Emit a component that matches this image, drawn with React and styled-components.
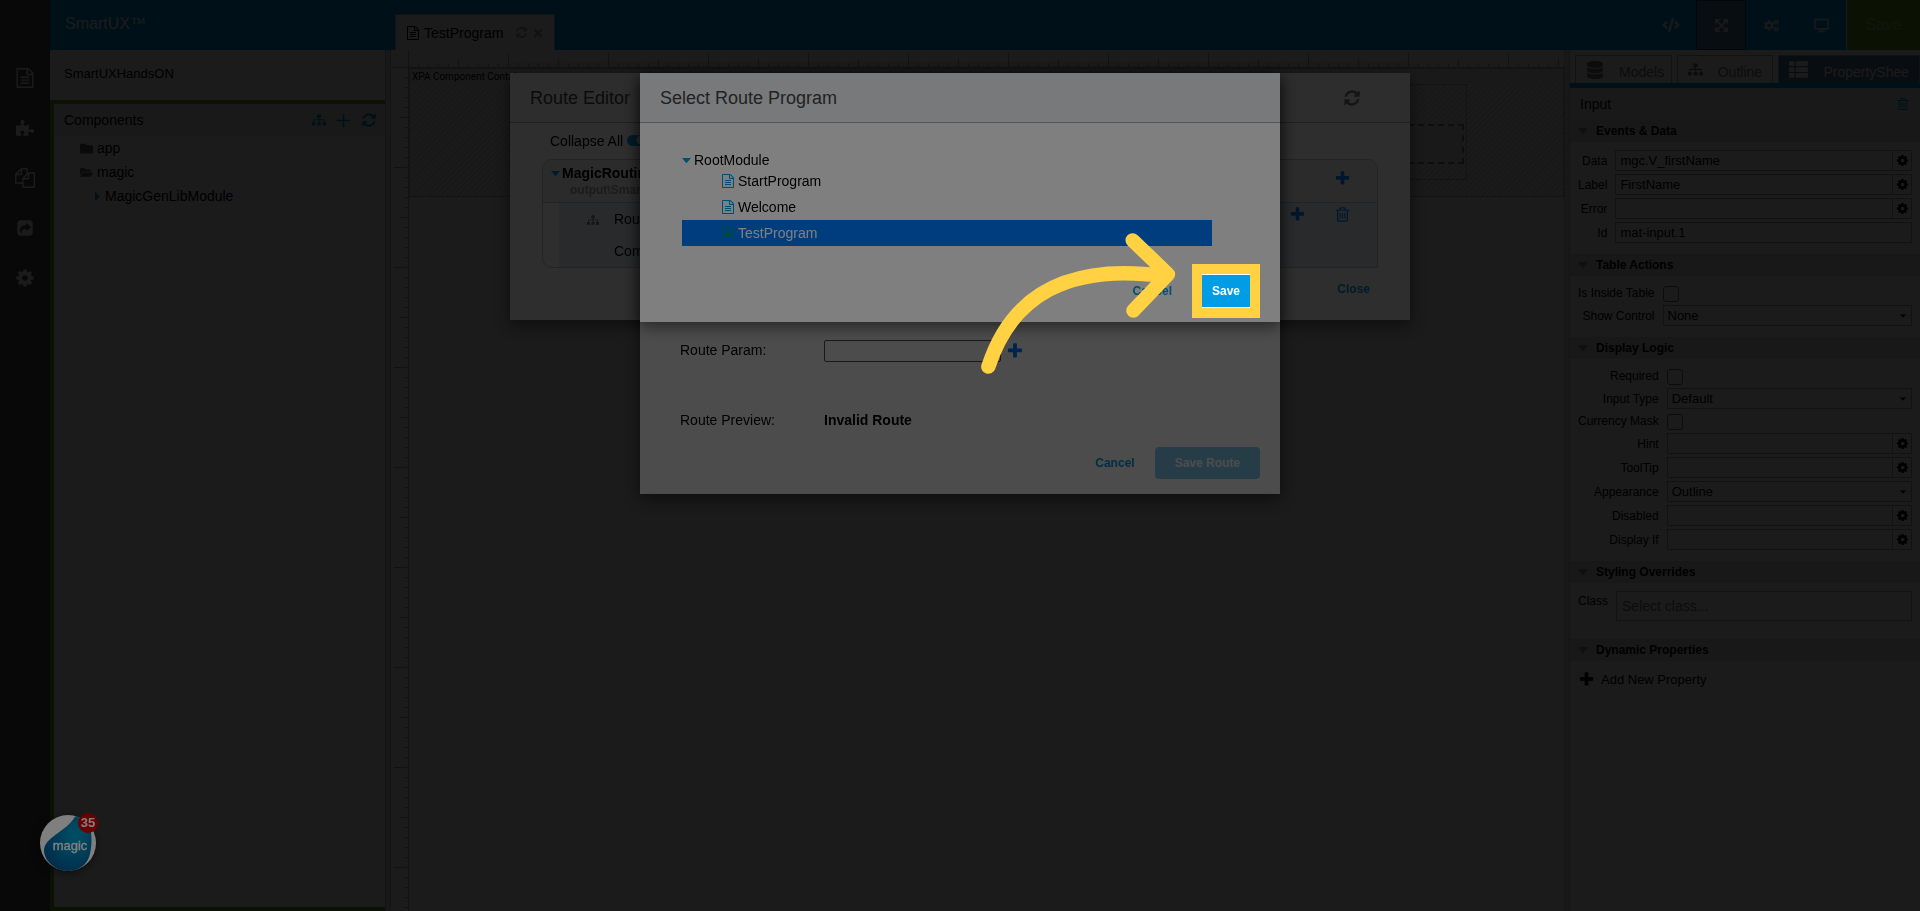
import React from 'react'
import styled, { createGlobalStyle } from 'styled-components'
import { FaCode, FaCogs, FaDatabase, FaDesktop, FaFolder, FaFolderOpen, FaPuzzlePiece, FaSitemap, FaThList, FaTimes } from 'react-icons/fa'

const GlobalStyle = createGlobalStyle`
    * {
        box-sizing: border-box;
    }

    body {
        margin: 0;
        font-family: "Liberation Sans", Arial, sans-serif;
        font-size: 14px;
        color: #000;
        overflow: hidden;
    }

    button, input, select {
        font-family: inherit;
    }

    button {
        border: 0;
        padding: 0;
        background: none;
        cursor: pointer;
    }
`;

const blue = '#009ce6';
const green = '#6fb02a';
const steel = '#4c7cae';
const line = '#aaa';

const paths = {
    refresh: 'M1639 1056q0 5-1 7-64 268-268 434.5t-478 166.5q-146 0-282.5-55t-243.5-157l-129 129q-19 19-45 19t-45-19-19-45v-448q0-26 19-45t45-19h448q26 0 45 19t19 45-19 45l-137 137q71 66 161 102t187 36q134 0 250-65t186-179q11-17 53-117 8-23 30-23h192q13 0 22.5 9.5t9.5 22.5zm25-800v448q0 26-19 45t-45 19h-448q-26 0-45-19t-19-45 19-45l138-138q-148-137-349-137-134 0-250 65t-186 179q-11 17-53 117-8 23-30 23h-199q-13 0-22.5-9.5t-9.5-22.5v-7q65-268 270-434.5t480-166.5q146 0 284 55.5t245 156.5l130-129q19-19 45-19t45 19 19 45z',
    plus: 'M1600 736v192q0 40-28 68t-68 28h-416v416q0 40-28 68t-68 28h-192q-40 0-68-28t-28-68v-416h-416q-40 0-68-28t-28-68v-192q0-40 28-68t68-28h416v-416q0-40 28-68t68-28h192q40 0 68 28t28 68v416h416q40 0 68 28t28 68z',
    thinPlus: 'M816 192h160v624h624v160h-624v624h-160v-624h-624v-160h624z',
    caretDown: 'M0 420h1792l-896 1000z',
    caretRight: 'M600 0v1792l1000-896z',
    expand: 'M1411 541l-355 355 355 355 144-144q29-31 70-14 39 17 39 59v448q0 26-19 45t-45 19h-448q-42 0-59-40-17-39 14-69l144-144-355-355-355 355 144 144q31 30 14 69-17 40-59 40h-448q-26 0-45-19t-19-45v-448q0-42 40-59 39-17 69 14l144 144 355-355-355-355-144 144q-19 19-45 19-12 0-24-5-40-17-40-59v-448q0-26 19-45t45-19h448q42 0 59 40 17 39-14 69l-144 144 355 355 355-355-144-144q-31-30-14-69 17-40 59-40h448q26 0 45 19t19 45v448q0 42-39 59-13 5-25 5-26 0-45-19z',
    cog: 'M1152 896q0-106-75-181t-181-75-181 75-75 181 75 181 181 75 181-75 75-181zm512-109v222q0 12-8 23t-20 13l-185 28q-19 54-39 91 35 50 107 138 10 12 10 25t-9 23q-27 37-99 108t-94 71q-12 0-26-9l-138-108q-44 23-91 38-16 136-29 186-7 28-36 28h-222q-14 0-24.5-8.5t-11.5-21.5l-28-184q-49-16-90-37l-141 107q-10 9-25 9-14 0-25-11-126-114-165-168-7-10-7-23 0-12 8-23 15-21 51-66.5t54-70.5q-27-50-41-99l-183-27q-13-2-21-12.5t-8-23.5v-222q0-12 8-23t19-13l186-28q14-46 39-92-40-57-107-138-10-12-10-24 0-10 9-23 26-36 98.5-107.5t94.5-71.5q13 0 26 10l138 107q44-23 91-38 16-136 29-186 7-28 36-28h222q14 0 24.5 8.5t11.5 21.5l28 184q49 16 90 37l142-107q9-9 24-9 13 0 25 10 129 119 165 170 7 8 7 22 0 12-8 23-15 21-51 66.5t-54 70.5q26 50 41 98l183 28q13 2 21 12.5t8 23.5z',
    file: 'M1596 380q28 28 48 76t20 88v1152q0 40-28 68t-68 28h-1344q-40 0-68-28t-28-68v-1600q0-40 28-68t68-28h896q40 0 88 20t76 48zm-444-244v376h376q-10-29-22-41l-313-313q-12-12-41-22zm384 1528v-1024h-416q-40 0-68-28t-28-68v-416h-768v1536h1280zm-1024-864q0-14 9-23t23-9h704q14 0 23 9t9 23v64q0 14-9 23t-23 9h-704q-14 0-23-9t-9-23v-64zm736 224q14 0 23 9t9 23v64q0 14-9 23t-23 9h-704q-14 0-23-9t-9-23v-64q0-14 9-23t23-9h704zm0 256q14 0 23 9t9 23v64q0 14-9 23t-23 9h-704q-14 0-23-9t-9-23v-64q0-14 9-23t23-9h704z',
    files: 'M1696 384q40 0 68 28t28 68v1216q0 40-28 68t-68 28h-960q-40 0-68-28t-28-68v-288h-544q-40 0-68-28t-28-68v-672q0-40 20-88t48-76l408-408q28-28 76-48t88-20h416q40 0 68 28t28 68v328q68-40 128-40h416zm-544 213l-299 299h299v-299zm-640-384l-299 299h299v-299zm196 647l316-316v-416h-384v416q0 40-28 68t-68 28h-416v640h512v-256q0-40 20-88t48-76zm956 804v-1152h-384v416q0 40-28 68t-68 28h-416v640h896z',
    trash: 'M704 736v576q0 14-9 23t-23 9h-64q-14 0-23-9t-9-23v-576q0-14 9-23t23-9h64q14 0 23 9t9 23zm256 0v576q0 14-9 23t-23 9h-64q-14 0-23-9t-9-23v-576q0-14 9-23t23-9h64q14 0 23 9t9 23zm256 0v576q0 14-9 23t-23 9h-64q-14 0-23-9t-9-23v-576q0-14 9-23t23-9h64q14 0 23 9t9 23zm128 724v-948h-896v948q0 22 7 40.5t14.5 27 10.5 8.5h832q3 0 10.5-8.500t14.500-27 7-40.500zm-672-1076h448l-48-117q-7-9-17-11h-317q-10 2-17 11zm928 32v64q0 14-9 23t-23 9h-96v948q0 83-47 143.5t-113 60.5h-832q-66 0-113-58.5t-47-141.5v-952h-96q-14 0-23-9t-9-23v-64q0-14 9-23t23-9h309l70-167q15-37 54-63t79-26h320q40 0 79 26t54 63l70 167h309q14 0 23 9t9 23z',
    share: 'M416 128h960q119 0 203.500 84.500t84.500 203.500v960q0 119-84.500 203.500t-203.500 84.500h-960q-119 0-203.500-84.500t-84.500-203.500v-960q0-119 84.500-203.500t203.500-84.500zm610 250v210q-330 0-490 150t-160 350q0 200 150 350 30 20 26-20-30-200 60-310t414-110v210q0 40 36 20l400-390q24-26 0-52l-400-390q-36-20-36-18z',
};

function Icon({ name, size = 16 }) {
    return (
        <svg width={size} height={size} viewBox="0 0 1792 1792" fill="currentColor" fillRule="evenodd" aria-hidden="true">
            <path d={paths[name]} />
        </svg>
    );
}

const Shell = styled.div`
    display: flex;
    height: 100vh;
    background: #fff;
`;

const Rail = styled.nav`
    width: 50px;
    padding-top: 53px;
    display: flex;
    flex-direction: column;
    background: #505050;

    button {
        height: 50px;
        color: #fff;
        display: flex;
        align-items: center;
        justify-content: center;
    }
`;

const Main = styled.div`
    flex: 1;
    min-width: 0;
    display: flex;
    flex-direction: column;
`;

const TopBar = styled.header`
    height: 50px;
    display: flex;
    background: ${blue};
    color: #fff;
`;

const Brand = styled.div`
    width: 345px;
    padding: 15px 0 0 15px;
    font-size: 16px;
    line-height: 18px;
`;

const ProgramTab = styled.div`
    align-self: flex-end;
    height: 36px;
    padding: 0 10px;
    display: flex;
    align-items: center;
    gap: 4px;
    background: #fff;
    border: 1px solid ${line};
    border-bottom: 0;
    color: #000;

    button {
        color: #aaa;
        display: flex;
    }

    span {
        margin-right: 8px;
    }
`;

const Tools = styled.div`
    margin-left: auto;
    display: flex;
`;

const ToolButton = styled.button`
    width: 50px;
    display: flex;
    align-items: center;
    justify-content: center;
    color: #e8e8e8;
    background: ${({ $active }) => $active ? steel : 'none'};
    border: ${({ $active }) => $active ? '1px solid #2c3f66' : '0'};
`;

const SaveTool = styled.button`
    width: 74px;
    border-left: 1px solid #fff;
    background: ${green};
    color: #99cc66;
    font-size: 16px;
`;

const Work = styled.div`
    flex: 1;
    min-height: 0;
    display: flex;
`;

const LeftPanel = styled.aside`
    width: 335px;
    display: flex;
    flex-direction: column;
`;

const ProjectName = styled.div`
    height: 50px;
    padding-left: 14px;
    font-size: 13px;
    line-height: 48px;
`;

const Components = styled.section`
    flex: 1;
    border: 4px solid ${green};
    border-right: 0;
`;

const ComponentsHead = styled.div`
    height: 32px;
    padding: 0 8px 0 10px;
    display: flex;
    align-items: center;
    background: #efefef;

    h2 {
        margin: 0 auto 0 0;
        font-size: 14px;
        font-weight: normal;
    }

    button {
        margin-left: 9px;
        color: ${blue};
        display: flex;
    }
`;

const Tree = styled.ul`
    margin: 0;
    padding: 0;
    list-style: none;
`;

const TreeItem = styled.li`
    height: 24px;
    padding-left: ${({ $indent }) => $indent}px;
    display: flex;
    align-items: center;
    gap: 4px;

    svg {
        color: ${({ $link }) => $link ? blue : '#666'};
    }
`;

const Splitter = styled.div`
    width: 6px;
    background: #e8e8e8;
    border: 1px solid #c0c0c0;
    border-width: 0 1px;
`;

const Canvas = styled.main`
    flex: 1;
    min-width: 0;
    display: grid;
    grid-template: 18px 1fr / 18px 1fr;
    background: #fafafa;
`;

const TopRuler = styled.div`
    grid-column: 2;
    border-bottom: 1px solid ${line};
    background:
        repeating-linear-gradient(90deg, transparent 0 99px, ${line} 99px 100px) left bottom / 100% 14px no-repeat,
        repeating-linear-gradient(90deg, transparent 0 49px, ${line} 49px 50px) left bottom / 100% 8px no-repeat,
        repeating-linear-gradient(90deg, transparent 0 9px, ${line} 9px 10px) left bottom / 100% 4px no-repeat;
`;

const Corner = styled.div`
    border: 1px solid ${line};
    border-width: 0 1px 1px 0;
`;

const SideRuler = styled.div`
    border-right: 1px solid ${line};
    background:
        repeating-linear-gradient(180deg, transparent 0 99px, ${line} 99px 100px) right top / 14px 100% no-repeat,
        repeating-linear-gradient(180deg, transparent 0 49px, ${line} 49px 50px) right top / 8px 100% no-repeat,
        repeating-linear-gradient(180deg, transparent 0 9px, ${line} 9px 10px) right top / 4px 100% no-repeat;
`;

const FormContainer = styled.div`
    height: 129px;
    border: 1px dotted #888;
    background: repeating-linear-gradient(135deg, #f4f4f4 0 3px, #dcdcdc 3px 4px);

    p {
        margin: 0;
        padding-left: 2px;
        background: #f0f0f0;
        font: 10px/15px Roboto, sans-serif;
    }
`;

const FormRow = styled.div`
    height: 96px;
    margin: 0 96px 0 99px;
    padding: 39px 2px 0;
    border: 1px dotted #888;
`;

const FormField = styled.div`
    height: 40px;
    border: 2px dashed #888;
    background: #eee;
`;

const RightPanel = styled.aside`
    width: 350px;
`;

const PanelTabs = styled.div`
    display: flex;
    gap: 5px;
    padding: 5px 0 0 5px;
    border-bottom: 5px solid ${blue};
`;

const PanelTab = styled.button`
    width: ${({ $wide }) => $wide ? 142 : 97}px;
    height: 28px;
    padding: 0 6px 0 10px;
    display: flex;
    align-items: center;
    gap: 15px;
    border: 1px solid ${line};
    border-bottom: 0;
    font-size: 14px;
    color: ${({ $wide }) => $wide ? '#fff' : '#777'};
    background: ${({ $wide }) => $wide ? steel : '#fff'};

    svg {
        flex: none;
    }

    span {
        padding-top: 4px;
        white-space: nowrap;
    }
`;

const SheetTitle = styled.div`
    height: 32px;
    padding: 0 10px;
    display: flex;
    justify-content: space-between;
    align-items: center;
    background: #f0f0f0;

    button {
        color: ${blue};
        display: flex;
    }
`;

const SectionHead = styled.h3`
    height: 22px;
    margin: 0;
    padding-left: 8px;
    display: flex;
    align-items: center;
    gap: 8px;
    background: #e4e4e4;
    font-size: 12px;
    color: #000;

    &::before {
        content: '';
        border: 5px solid transparent;
        border-top: 7px solid #999;
        border-bottom: 0;
    }
`;

const Fields = styled.div`
    padding: 8px 8px 11px;
    display: grid;
    grid-template-columns: auto 1fr;
    gap: 3px 8px;
    align-items: center;

    label {
        font-size: 12px;
        text-align: right;
        white-space: nowrap;
    }

    input[type='checkbox'] {
        appearance: none;
        width: 16px;
        height: 16px;
        margin: 2px 0 0;
        border: 1px solid #777;
        border-radius: 3px;
    }
`;

const Control = styled.div`
    height: 21px;
    position: relative;
    display: flex;
    border: 1px solid ${line};

    input, select {
        flex: 1;
        min-width: 0;
        border: 0;
        padding: 0 4px;
        appearance: none;
        background: none;
        font-size: 13px;
        color: #000;
    }

    button {
        width: 19px;
        border-left: 1px solid ${line};
        display: flex;
        align-items: center;
        justify-content: center;
    }

    > svg {
        position: absolute;
        right: 5px;
        top: 7px;
    }
`;

const ClassInput = styled.input`
    width: 100%;
    height: 30px;
    border: 1px solid ${line};
    padding: 0 5px;
    background: none;
    font-size: 14px;

    &::placeholder {
        color: #777;
    }
`;

const ClassField = styled(Fields)`
    padding-bottom: 18px;

    label {
        align-self: start;
        padding-top: 3px;
    }
`;

const AddProperty = styled.button`
    padding: 10px 8px;
    display: flex;
    align-items: center;
    gap: 6px;
    font-size: 13px;
`;

const Backdrop = styled.div`
    position: fixed;
    inset: 0;
    padding-top: 73px;
    display: flex;
    justify-content: center;
    align-items: flex-start;
    background: rgba(0, 0, 0, 0.4);
`;

const Dialog = styled.section`
    width: ${({ $width }) => $width}px;
    min-height: ${({ $tall }) => $tall ? 421 : 0}px;
    display: flex;
    flex-direction: column;
    background: #fff;
    box-shadow: 0 5px 15px rgba(0, 0, 0, 0.5);
`;

const DialogHead = styled.header`
    height: 50px;
    padding: 0 49px 0 20px;
    display: flex;
    align-items: center;
    justify-content: space-between;
    background: ${({ $tint }) => $tint ? '#eff2f5' : '#fbfbfb'};
    border-bottom: 1px solid #adb1b5;
    color: #444;

    h2 {
        margin: 0;
        padding-top: 2px;
        font-size: 18px;
        font-weight: normal;
    }

    button {
        color: #777;
        display: flex;
    }
`;

const DialogFoot = styled.footer`
    padding: 0 20px 15px;
    display: flex;
    justify-content: flex-end;
`;

const DialogButton = styled.button`
    height: 32px;
    padding: 0 20px;
    border-radius: 4px;
    font-size: 12px;
    font-weight: bold;
    color: ${({ $primary }) => $primary ? '#fff' : blue};
    background: ${({ $primary }) => $primary ? blue : 'none'};

    &:disabled {
        opacity: 0.5;
    }
`;

const EditorBody = styled.div`
    padding: 9px 32px 5px;
`;

const Collapse = styled.label`
    height: 27px;
    padding-left: 8px;
    display: flex;
    align-items: flex-start;
    line-height: 18px;
    gap: 4px;

    input {
        appearance: none;
        width: 22px;
        height: 11px;
        margin: 3px 0 0;
        border-radius: 6px;
        background: radial-gradient(circle at 14px 5px, #fff 4px, ${blue} 5px);
    }
`;

const RouteCard = styled.div`
    border: 1px solid #c4c4c4;
    border-radius: 10px 10px 0 10px;
    overflow: hidden;
`;

const RouteCardHead = styled.div`
    height: 43px;
    padding: 4px 26px 0 8px;
    display: flex;
    justify-content: space-between;
    align-items: flex-start;
    border-bottom: 1px solid #c4c4c4;
    background: #f4f4f4;

    strong {
        display: flex;
        align-items: center;
        gap: 2px;
        line-height: 18px;
    }

    strong svg {
        color: ${blue};
    }

    small {
        display: block;
        padding-left: 19px;
        font-size: 12px;
        line-height: 16px;
        font-weight: bold;
        color: #999;
    }

    button {
        margin-top: 6px;
        color: #007bff;
        display: flex;
    }
`;

const Route = styled.div`
    height: 64px;
    margin-left: 16px;
    padding: 0 26px 0 28px;
    display: flex;
    align-items: flex-start;
    background: #e6ecf5;

    > svg {
        margin-top: 11px;
        color: #777;
    }

    div {
        margin: 0 auto 0 15px;
        line-height: 32px;
    }

    button {
        margin: 3px 0 0 28px;
        color: #007bff;
        display: flex;
    }
`;

const RouteForm = styled.div`
    flex: 1;
    padding: 266px 40px 0;
    display: grid;
    grid-template-columns: 144px 1fr;
    grid-template-rows: 24px 1fr;
    row-gap: 49px;

    label {
        line-height: 22px;
    }

    div {
        display: flex;
        align-items: center;
        gap: 5px;
    }

    input {
        width: 177px;
        height: 22px;
        border: 1px solid #555;
        border-radius: 2px;
        background: none;
    }

    button {
        color: #007bff;
        display: flex;
    }
`;

const PickBody = styled.div`
    padding: 29px 68px 29px 42px;
`;

const PickRoot = styled.div`
    height: 16px;
    display: flex;
    align-items: center;
    gap: 3px;

    svg {
        color: ${blue};
    }
`;

const PickItem = styled.li`
    height: 26px;
    padding-left: 39px;
    display: flex;
    align-items: center;
    gap: 3px;
    color: ${({ $selected }) => $selected ? '#fff' : '#000'};
    background: ${({ $selected }) => $selected ? '#007bff' : 'none'};

    svg {
        color: ${({ $selected }) => $selected ? '#00909c' : blue};
    }
`;

const Launcher = styled.button`
    position: fixed;
    left: 40px;
    bottom: 40px;
    width: 56px;
    height: 56px;
    border-radius: 50%;
    box-shadow: 0 2px 8px rgba(0, 0, 0, 0.5);

    svg {
        display: block;
    }
`;

const Badge = styled.span`
    position: absolute;
    top: -2px;
    right: -2px;
    width: 20px;
    height: 20px;
    border-radius: 50%;
    background: #d30000;
    color: #fff;
    font: bold 13px/20px "Liberation Sans", Arial, sans-serif;
`;

// Dims everything except the highlighted control
const Guide = styled.div`
    position: fixed;
    inset: 0;
    padding-top: 73px;
    display: flex;
    justify-content: center;
    overflow: hidden;
    pointer-events: none;
`;

const GuideFrame = styled.div`
    position: relative;
    width: 640px;
    height: 249px;

    svg {
        position: absolute;
        left: 337px;
        top: 155px;
    }
`;

const Spotlight = styled.div`
    position: absolute;
    right: 20px;
    bottom: 4px;
    width: 68px;
    height: 54px;
    border: 10px solid #ffd143;
    box-shadow: 0 0 0 2000px rgba(0, 0, 0, 0.5);
`;

const railItems = [
    { icon: <Icon name="file" size={20} />, label: 'Programs' },
    { icon: <FaPuzzlePiece size={18} />, label: 'Components' },
    { icon: <Icon name="files" size={20} />, label: 'Templates' },
    { icon: <Icon name="share" size={18} />, label: 'Export' },
    { icon: <Icon name="cog" size={20} />, label: 'Settings' },
];

function Field({ label, id, type = 'gear', value = '' }) {
    if (type === 'check') {
        return (
            <>
                <label htmlFor={id}>{label}</label>
                <input type="checkbox" id={id} />
            </>
        );
    }

    return (
        <>
            <label htmlFor={id}>{label}</label>
            <Control>
                {type === 'select' ? (
                    <select id={id} defaultValue={value}>
                        <option>{value}</option>
                    </select>
                ) : (
                    <input id={id} type="text" defaultValue={value} />
                )}
                {type === 'select' && <Icon name="caretDown" size={6} />}
                {type === 'gear' && <button aria-label={`${label} expression`}><Icon name="cog" size={13} /></button>}
            </Control>
        </>
    );
}

function PropertySheet() {
    return (
        <RightPanel>
            <PanelTabs>
                <PanelTab><FaDatabase size={18} /><span>Models</span></PanelTab>
                <PanelTab><FaSitemap size={15} /><span>Outline</span></PanelTab>
                <PanelTab $wide><FaThList size={19} /><span>PropertyShee</span></PanelTab>
            </PanelTabs>
            <SheetTitle>
                Input
                <button aria-label="Delete"><Icon name="trash" size={14} /></button>
            </SheetTitle>
            <SectionHead>Events &amp; Data</SectionHead>
            <Fields>
                <Field id="data" label="Data" value="mgc.V_firstName" />
                <Field id="label" label="Label" value="FirstName" />
                <Field id="error" label="Error" />
                <Field id="id" label="Id" type="text" value="mat-input.1" />
            </Fields>
            <SectionHead>Table Actions</SectionHead>
            <Fields>
                <Field id="inside" label="Is Inside Table" type="check" />
                <Field id="show" label="Show Control" type="select" value="None" />
            </Fields>
            <SectionHead>Display Logic</SectionHead>
            <Fields>
                <Field id="required" label="Required" type="check" />
                <Field id="type" label="Input Type" type="select" value="Default" />
                <Field id="mask" label="Currency Mask" type="check" />
                <Field id="hint" label="Hint" />
                <Field id="tooltip" label="ToolTip" />
                <Field id="appearance" label="Appearance" type="select" value="Outline" />
                <Field id="disabled" label="Disabled" />
                <Field id="display" label="Display If" />
            </Fields>
            <SectionHead>Styling Overrides</SectionHead>
            <ClassField>
                <label htmlFor="class">Class</label>
                <ClassInput id="class" placeholder="Select class..." />
            </ClassField>
            <SectionHead>Dynamic Properties</SectionHead>
            <AddProperty><Icon name="plus" size={17} />Add New Property</AddProperty>
        </RightPanel>
    );
}

function RouteEditor() {
    return (
        <Backdrop>
            <Dialog $width={900}>
                <DialogHead>
                    <h2>Route Editor</h2>
                    <button aria-label="Refresh"><Icon name="refresh" size={18} /></button>
                </DialogHead>
                <EditorBody>
                    <Collapse>Collapse All <input type="checkbox" defaultChecked /></Collapse>
                    <RouteCard>
                        <RouteCardHead>
                            <div>
                                <strong><Icon name="caretDown" size={9} />MagicRouting</strong>
                                <small>output\Smart</small>
                            </div>
                            <button aria-label="Add route"><Icon name="plus" size={17} /></button>
                        </RouteCardHead>
                        <Route>
                            <FaSitemap size={12} />
                            <div>
                                Route<br />
                                Comp
                            </div>
                            <button aria-label="Add child route"><Icon name="plus" size={17} /></button>
                            <button aria-label="Delete route"><Icon name="trash" size={17} /></button>
                        </Route>
                    </RouteCard>
                </EditorBody>
                <DialogFoot>
                    <DialogButton>Close</DialogButton>
                </DialogFoot>
            </Dialog>
        </Backdrop>
    );
}

function EditRoute() {
    return (
        <Backdrop>
            <Dialog $width={640} $tall>
                <RouteForm>
                    <label htmlFor="param">Route Param:</label>
                    <div>
                        <input id="param" type="text" />
                        <button aria-label="Add parameter"><Icon name="plus" size={18} /></button>
                    </div>
                    <span>Route Preview:</span>
                    <strong>Invalid Route</strong>
                </RouteForm>
                <DialogFoot>
                    <DialogButton>Cancel</DialogButton>
                    <DialogButton $primary disabled>Save Route</DialogButton>
                </DialogFoot>
            </Dialog>
        </Backdrop>
    );
}

function SelectProgram() {
    const [selected, setSelected] = React.useState('TestProgram');

    return (
        <Backdrop>
            <Dialog $width={640}>
                <DialogHead $tint>
                    <h2>Select Route Program</h2>
                </DialogHead>
                <PickBody>
                    <PickRoot><Icon name="caretDown" size={9} />RootModule</PickRoot>
                    <Tree>
                        {['StartProgram', 'Welcome', 'TestProgram'].map((name) => (
                            <PickItem key={name} $selected={name === selected} onClick={() => setSelected(name)}>
                                <Icon name="file" size={14} />{name}
                            </PickItem>
                        ))}
                    </Tree>
                </PickBody>
                <DialogFoot>
                    <DialogButton>Cancel</DialogButton>
                    <DialogButton $primary>Save</DialogButton>
                </DialogFoot>
            </Dialog>
        </Backdrop>
    );
}

function MagicLauncher() {
    return (
        <Launcher>
            <svg width="56" height="56" viewBox="0 0 168 168">
                <defs>
                    <radialGradient id="drop" cx="0.65" cy="0.35" r="0.7">
                        <stop offset="0" stopColor="#009fcb" />
                        <stop offset="1" stopColor="#005c99" />
                    </radialGradient>
                </defs>
                <circle cx="84" cy="84" r="84" fill="#fff" />
                <path d="M106 4C78 52 12 66 12 108C14 142 50 168 86 168C118 166 140 150 148 124C156 96 156 72 152 44C140 22 122 8 106 4Z" fill="url(#drop)" />
                <text x="90" y="104" textAnchor="middle" fontFamily="Liberation Sans, Arial, sans-serif" fontSize="39" fill="#fff" stroke="#fff" strokeWidth="1">magic</text>
            </svg>
            <Badge>35</Badge>
        </Launcher>
    );
}

function App() {
    return (
        <>
            <GlobalStyle />
            <Shell>
                <Rail>
                    {railItems.map((item) => (
                        <button key={item.label} aria-label={item.label}>{item.icon}</button>
                    ))}
                </Rail>
                <Main>
                    <TopBar>
                        <Brand>SmartUX™</Brand>
                        <ProgramTab>
                            <Icon name="file" size={14} />
                            <span>TestProgram</span>
                            <button aria-label="Reload program"><Icon name="refresh" size={13} /></button>
                            <button aria-label="Close program"><FaTimes size={12} /></button>
                        </ProgramTab>
                        <Tools>
                            <ToolButton aria-label="Code"><FaCode size={18} /></ToolButton>
                            <ToolButton aria-label="Layout" $active><Icon name="expand" size={15} /></ToolButton>
                            <ToolButton aria-label="Build"><FaCogs size={15} /></ToolButton>
                            <ToolButton aria-label="Preview"><FaDesktop size={15} /></ToolButton>
                            <SaveTool>Save</SaveTool>
                        </Tools>
                    </TopBar>
                    <Work>
                        <LeftPanel>
                            <ProjectName>SmartUXHandsON</ProjectName>
                            <Components>
                                <ComponentsHead>
                                    <h2>Components</h2>
                                    <button aria-label="Tree view"><FaSitemap size={14} /></button>
                                    <button aria-label="Add component"><Icon name="thinPlus" size={17} /></button>
                                    <button aria-label="Refresh components"><Icon name="refresh" size={16} /></button>
                                </ComponentsHead>
                                <Tree>
                                    <TreeItem $indent={26}><FaFolder size={13} />app</TreeItem>
                                    <TreeItem $indent={26}><FaFolderOpen size={13} />magic</TreeItem>
                                    <TreeItem $indent={38} $link><Icon name="caretRight" size={9} />MagicGenLibModule</TreeItem>
                                </Tree>
                            </Components>
                        </LeftPanel>
                        <Splitter />
                        <Canvas>
                            <Corner />
                            <TopRuler />
                            <SideRuler />
                            <div>
                                <FormContainer>
                                    <p>XPA Component Container</p>
                                    <FormRow>
                                        <FormField />
                                    </FormRow>
                                </FormContainer>
                            </div>
                        </Canvas>
                        <Splitter />
                        <PropertySheet />
                    </Work>
                </Main>
            </Shell>
            <RouteEditor />
            <EditRoute />
            <SelectProgram />
            <MagicLauncher />
            <Guide>
                <GuideFrame>
                    <Spotlight />
                    <svg width="203" height="150" viewBox="81 84 609 450" fill="none" stroke="#ffd143" strokeWidth="43" strokeLinecap="round" strokeLinejoin="round">
                        <path d="M115 500C185 285 355 190 640 228" />
                        <path d="M548 121L654 223L550 332" />
                    </svg>
                </GuideFrame>
            </Guide>
        </>
    );
}

export default App;
